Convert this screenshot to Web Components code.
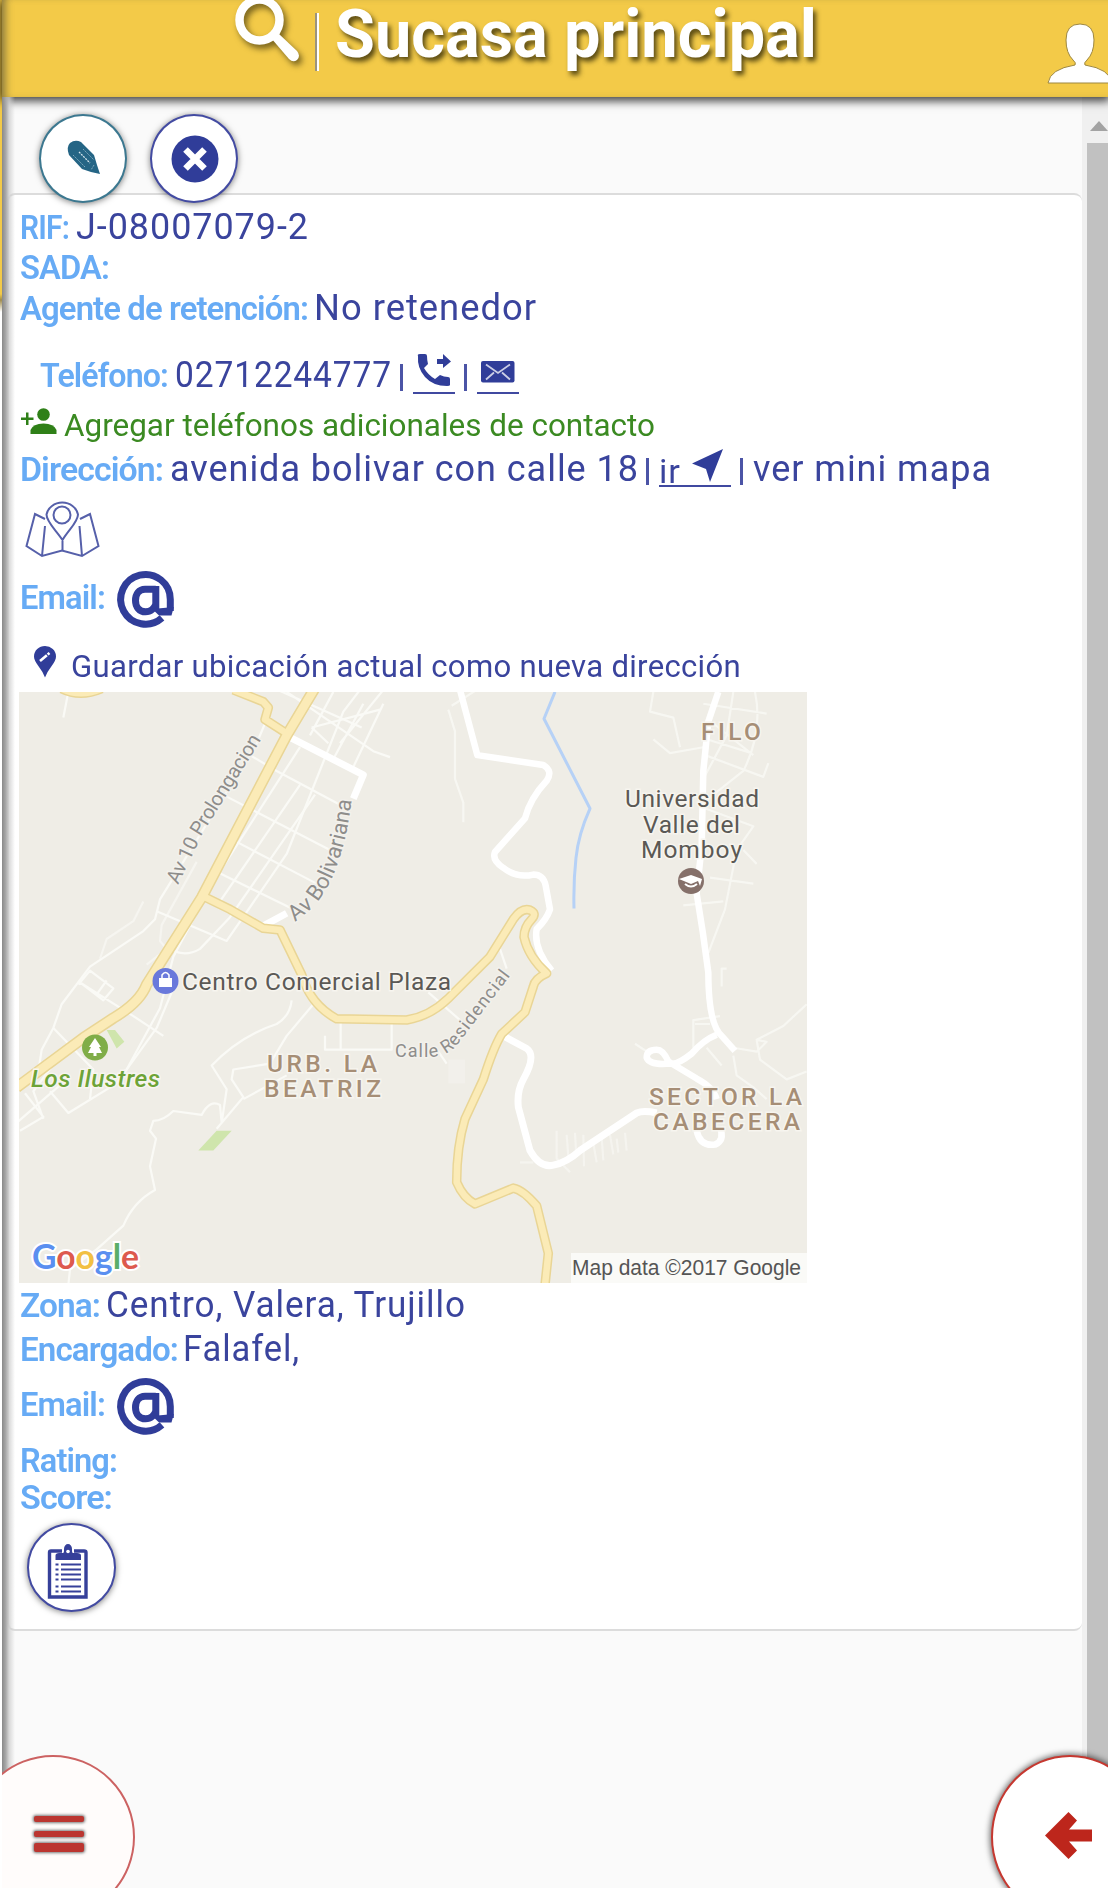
<!DOCTYPE html>
<html lang="es">
<head>
<meta charset="utf-8">
<title>Sucasa principal</title>
<style>
html,body{margin:0;height:1888px;overflow:hidden;background:#fff;font-family:Roboto,"Liberation Sans",sans-serif}
</style>
</head>
<body>
<client-app></client-app>
<script>
const define=(name,html,setup)=>customElements.define(name,class extends HTMLElement{
  connectedCallback(){
    if(this.shadowRoot)return;
    this.attachShadow({mode:'open'}).innerHTML=html;
    if(setup)setup(this,this.shadowRoot);
  }
});

// One run of text drawn at an exact advance width.
define('fit-text',`<style>
:host{display:block;flex:none;line-height:1;white-space:nowrap}
span{display:inline-block;transform-origin:0 50%}
:host([kind=label]){font-size:33px;font-weight:600;color:#67abf5;letter-spacing:-.9px}
:host([kind=label]) span{margin-left:1px}
:host([kind=value]){font-size:37.3px;color:#3a449d;letter-spacing:1px}
:host([kind=link]){font-size:31px;color:#3a449d;letter-spacing:.3px}
:host([kind=add]){font-size:31px;color:#3b8a22}
:host([kind=title]){font-size:66px;font-weight:700;color:#fff;text-shadow:3px 4px 5px rgba(60,50,10,.85)}
</style><span><slot></slot></span>`,(el,root)=>{
  const w=+el.getAttribute('w'),s=root.querySelector('span');
  el.style.width=w+'px';
  const n=s.getBoundingClientRect().width;
  if(n)s.style.transform='scaleX('+w/n+')';
});

// A row whose text baseline lies --b below its top.
define('info-row',`<style>
:host{display:flex;align-items:baseline;box-sizing:border-box;flex:none}
i{width:0;height:var(--b,0px);flex:none}
</style><i></i><slot></slot>`);

define('bar-mark',`<style>:host{display:block;flex:none;width:3px;height:27px;align-self:flex-start;background:#4b54a6}</style>`);

const icons={
 phone:['0 0 34 32','<path d="M1 2Q0 0 3 0H8Q10 0 10 2Q10 6 11 10L7 14Q11 21 18 25L23 21Q27 23 31 23Q33 23 33 25V31Q33 32 30 32Q16 32 8 23Q0 14 1 2Z"/><path d="M20 5H26V0L34 7.500L26 14V10H20Z"/>'],
 mail:['0 0 34 22','<rect x="0" y="0" width="33.500" height="21.500" rx="2"/><path d="M5 3.500L17 12L29 3.500M5 18.500L13 11.500M29 18.500L21 11.500" fill="none" stroke="#fff" stroke-opacity=".75" stroke-width="1.800"/>'],
 person:['0 0 36 26','<path d="M0 9.500H5V4.500H7.500V9.500H12.500V12H7.500V17H5V12H0Z"/><circle cx="22.500" cy="6.500" r="6.300"/><path d="M9.500 26V22Q12 15.500 22.500 15.500Q33 15.500 35.500 22V26Z"/>'],
 go:['0 0 32 33','<path d="M31 0L18 33L14 20L0 14.500Z"/>'],
 map:['0 0 76 60','<g fill="none" stroke="#5660aa" stroke-width="2"><path d="M37.500 41C31 31 21.500 23 21.500 15.500A16 14.500 0 0 1 53 15.500C53 23 43.500 31 37.500 41ZM37.500 42V52"/><circle cx="37" cy="16" r="8.500"/><path d="M20 20L10 15L1.500 47L17 57L37 51.500L57 57L73.500 47L65 15L55 20M20 27L17 57M54.500 27L57 57"/></g>'],
 at:['0 0 58 58','<g fill="none" stroke="#303d99" stroke-width="7"><path d="M45 46.800A24.800 24.800 0 1 1 53.300 28.500V40"/><path d="M38.800 15V40M38.800 18.200H28C22 18.200 18.500 23 18.500 29.500C18.500 36 22.500 40.800 28.500 40.800C34 40.800 37.500 37 38.800 33"/><path d="M35.300 38L56.800 36L54.500 44.500H42Z" fill="#303d99" stroke="none"/></g>'],
 pin:['0 0 22 32','<path d="M11 31.500Q9 26 4 19.500Q0 14 0 10.500A11 10.500 0 0 1 22 10.500Q22 14 18 19.500Q13 26 11 31.500Z"/><path d="M6 15L15.500 7" stroke="#fff" stroke-width="2.600" stroke-dasharray="9 1 3"/>'],
 search:['0 0 66 66','<ellipse cx="24.500" cy="23" rx="20" ry="20.500" fill="none" stroke="#fff" stroke-width="8.500"/><path d="M36 41L44 37L62 54Q66 59 62 63Q58 66 54 62Z" fill="#fff"/>'],
 user:['0 0 64 60','<path d="M0 59Q2 45 27 41Q28.500 39 25 36Q18 29 18 16Q18 0 32 0Q46 0 46 16Q46 29 39 36Q35.500 39 37 41Q62 45 64 59Z" fill="#fff" stroke="#9d8740" stroke-width="1"/>'],
 pencil:['0 0 32 34','<path d="M2 2Q7-2 13 1L26 14L29 24L32 33L23 31L14 28L1 14Q-2 6 2 2Z"/><path d="M5 14L17 26M15 8L26 19M26 24L23 29" stroke="#7fa8bc" stroke-width="1" stroke-dasharray="2 1" fill="none"/><path d="M11 11L22 22" stroke="#d6e7ee" stroke-width="1.300" stroke-dasharray="2 1"/>'],
 close:['0 0 48 48','<circle cx="24" cy="24" r="23.500"/><path d="M14.500 14.500L33.500 33.500M33.500 14.500L14.500 33.500" stroke="#fff" stroke-width="6.500"/>'],
 clip:['0 0 40 56','<path d="M14 7H3Q1.500 7 1.500 8.500V53H38V8.500Q38 7 36 7H26" fill="none" stroke="#36409a" stroke-width="3.400"/><path d="M7.500 16V11.500Q7.500 9 11 9H15Q16 9 16 7V5A4 5 0 0 1 24 5V7Q24 9 25 9H29Q33 9 33 11.500V16Z"/><circle cx="20" cy="7.500" r="1.800" fill="#fff"/><path d="M7.500 20.500H10.500M13 20.500H33M7.500 25.500H10.500M13 25.500H33M7.500 30.500H10.500M13 30.500H33M7.500 35.500H10.500M13 35.500H33M7.500 42.500H10.500M13 42.500H33M7.500 47.500H10.500M13 47.500H33" stroke="#36409a" stroke-width="1.800"/>'],
 back:['0 0 47 47','<path d="M0 23.500L23.500 0L32 8.500L24 17.500H47V29.500H24L32 38.500L23.500 47Z"/>']
};
define('ui-icon',`<style>:host{display:block;flex:none;align-self:flex-start;fill:currentColor;color:#303d99}svg{display:block;overflow:visible;width:100%;height:100%}</style>`,(el,root)=>{
  const [vb,body]=icons[el.getAttribute('name')];
  const [,,w,h]=vb.split(' ');
  el.style.width=w+'px';el.style.height=h+'px';
  root.innerHTML+=`<svg viewBox="${vb}">${body}</svg>`;
});

define('icon-link',`<style>:host{display:flex;flex:none;box-sizing:border-box;align-self:flex-start;align-items:baseline;border-bottom:2.500px solid #4049a0}</style><slot></slot>`);

define('round-button',`<style>
:host{display:flex;flex:none;align-self:flex-start;box-sizing:border-box;width:88px;height:89px;border:2px solid currentColor;border-radius:50%;background:#fff;color:#434ba2;box-shadow:0 1px 6px rgba(0,0,0,.5)}
</style><slot></slot>`);

define('app-header',`<style>
:host{display:flex;flex:none;height:97px;background:#f3ca48;box-shadow:0 2px 9px 2px rgba(0,0,0,.75),inset 8px 0 8px -5px rgba(90,85,60,.75);position:relative;z-index:1;margin-left:2px;overflow:visible}
ui-icon[name=search]{margin:-3px 0 0 233px;filter:drop-shadow(3px 4px 3px rgba(60,50,10,.7))}
.sep{width:2px;height:58px;margin:13px 0 0 14px;background:#fff;border-left:2px solid #9b937c;flex:none}
fit-text{margin:2px 0 0 16px}
ui-icon[name=user]{margin:24px 0 0 231px}
</style>
<ui-icon name="search"></ui-icon><div class="sep"></div><fit-text kind="title" w="482">Sucasa principal</fit-text><ui-icon name="user"></ui-icon>`);

define('scroll-track',`<style>
:host{display:flex;flex-direction:column;width:26px;flex:none;background:#f0f0f0}
.up{width:0;height:0;border:9px solid transparent;border-top:0;border-bottom:10px solid #a3a3a3;margin:24px 0 0 8px}
.thumb{flex:1;background:#c1c1c1;margin:12px 0 0 5px}
</style><div class="up"></div><div class="thumb"></div>`);

define('static-map',`<style>
:host{display:block;flex:none;width:788px;height:591px}
svg{display:block}
path.r,.w path{vector-effect:non-scaling-stroke;fill:none;stroke-linejoin:round}
text{font-family:Roboto,"Liberation Sans",sans-serif;font-size:24.500px}
.p{fill:#5b5955;stroke:#f7f5ef;stroke-width:3px;paint-order:stroke}
.a{fill:#a68e76;font-weight:500;stroke:#f7f5ef;stroke-width:3px;paint-order:stroke}
.s{fill:#8e8d8b;font-size:20px;stroke:#f3f1ec;stroke-width:3px;paint-order:stroke}
</style>
<svg width="788" height="591" viewBox="19 692 788 591">
<defs>
<path class="r" id="yr" d="M945 20L860 140L605 550L500 690L440 770Q420 815 340 855L250 905L50 1030"/>
<path class="r" id="yb" d="M700 25L790 55L805 70L795 100L860 135M185 22Q240 45 305 22M605 545L690 580L790 628L840 632L905 745Q930 820 1010 857L1220 860Q1290 850 1345 805L1470 700L1540 605Q1565 575 1590 582Q1612 590 1595 605Q1572 625 1572 650Q1585 700 1640 742Q1605 755 1600 775L1575 840L1505 895Q1480 930 1450 1010L1395 1110Q1370 1180 1370 1270Q1390 1310 1425 1325L1540 1285Q1570 1290 1610 1330L1645 1450L1635 1530"/>
</defs>
<rect x="19" y="692" width="788" height="591" fill="#efede6"/>
<g transform="translate(0 680) scale(.33333 .39541)">
<path d="M320 885L345 885L373 915L350 932Z" fill="#cfe5ac"/><path d="M650 1140H695L640 1190H595Z" fill="#cfe5ac"/>
<rect x="1345" y="960" width="50" height="60" fill="#f2f0eb"/>
<g class="w" stroke="#fafaf6" stroke-width="2.200">
<path d="M795 110L770 160L480 555L465 605L430 635L270 725L185 820L160 880L125 935L115 990"/>
<path d="M430 560L400 610L320 655L300 705M590 460L485 620L480 660L500 680L440 720" stroke-opacity=".6"/>
<path d="M470 585L680 660L860 440L1030 80L1080 25M820 20L1085 120M860 30L1120 180L1170 195M900 170L640 510L520 700L480 830L380 985L350 1000"/>
<path d="M750 190L830 230L1030 320M680 295L990 430M700 405L950 515M650 485L880 580M1020 160L1150 25M1150 60L1060 220M1000 200L1090 60M935 120L1140 75M945 290L690 600L600 680Q560 700 520 685M900 265L660 560M935 120L985 160M1000 30L930 140"/>
<path d="M235 770L270 735L340 780L310 810L240 765L400 850L490 900M290 795L320 760M160 880L280 985L270 1060M180 950L100 1040L130 1110M50 1120L200 1010M75 1045L130 1105L60 1140M150 1040L205 1095L350 1020L470 880L530 760"/>
<path d="M940 820L860 900L810 970L700 985L695 1010L730 1055L650 1135M875 810Q870 850 830 870Q720 900 635 975L680 1035L665 1120M860 1000L730 1060M665 1120L660 1075Q630 1060 605 1100L520 1090Q490 1115 460 1115L450 1140L468 1160L450 1230L465 1290Q400 1320 370 1380L290 1440L210 1490L205 1530"/>
<path d="M1022 860V935H975V900M1175 860V935H980M1500 680L1520 730M1285 790L1380 860M1315 940L1340 970M205 30L190 95"/>
<path stroke-opacity=".75" d="M1355 65L1430 25M1345 75L1365 130L1365 250L1390 310V360M1960 30L1950 80L2020 95L2040 170M1960 150L2010 185L2110 170M2140 110L2260 190M2200 30L2180 140L2110 250M2265 30Q2290 130 2230 230L2110 310M2110 60L2300 85M2120 150L2255 185M2115 190L2290 245L2305 210M2100 320L2260 370L2210 430L2175 580L2125 690M2130 500L2260 515M2050 570L2170 560M2230 430L2270 465"/>
<path stroke-opacity=".75" d="M2180 730H2165V775M2085 870H2130M2080 930V860L2160 850M2120 930L2165 975M2200 930L2270 940L2300 915L2270 910L2350 875L2420 820M2270 910L2280 960L2360 1010L2420 990M2200 950L2210 1000L2260 1030L2300 1060M1905 920L1950 945"/>
<path stroke-opacity=".55" d="M1670 1140V1210L1710 1245M1700 1150L1705 1205M1725 1145L1728 1190M1750 1150L1752 1230M1780 1170L1790 1220M1805 1155L1810 1215M1830 1150L1840 1200M1850 1160L1855 1195M1875 1145L1880 1190M1560 1220H1600"/>
</g>
<g class="w" stroke="#fff" stroke-width="6.500">
<path d="M870 145L1090 240L1060 300M790 622L860 590" stroke-width="7"/>
<path d="M1380 25L1432 190L1630 215Q1660 230 1640 255Q1590 300 1575 350L1485 435Q1475 455 1510 475Q1550 502 1600 492Q1630 492 1637 520L1650 580Q1640 605 1610 630Q1600 680 1655 735"/>
<path d="M1510 900L1580 932Q1610 950 1570 1010Q1550 1040 1555 1080L1590 1190Q1620 1235 1660 1227Q1700 1220 1740 1190L1910 1095Q1930 1088 1970 1095" stroke-width="7"/>
<path d="M2155 30L2125 105L2110 230L2105 420L2090 540Q2110 640 2125 740Q2125 870 2165 900L2205 938"/>
<path d="M2150 897Q2110 910 2075 945Q2030 975 2010 970Q1950 975 1940 955Q1940 935 1970 935Q1990 935 2005 965L2090 1008Q2140 1030 2150 1060M2090 1140Q2100 1180 2145 1175Q2175 1165 2160 1130"/>
</g>
<g class="w" stroke="#b6d1f6" stroke-width="3"><path d="M1665 30L1632 98L1770 325Q1735 390 1728 450Q1720 510 1722 578"/></g>
<g stroke="#e9d595"><use href="#yb" stroke-width="9.500"/><use href="#yr" stroke-width="11.500"/></g>
<g stroke="#fbebb7"><use href="#yb" stroke-width="6.500"/><use href="#yr" stroke-width="8.500"/></g>
</g>
<g><circle cx="165.500" cy="981" r="13" fill="#6a79db"/><path d="M159 978H172V987H159Z" fill="#fff"/><path d="M162 978V975Q165.500 970 169 975V978" fill="none" stroke="#fff" stroke-width="1.500"/>
<circle cx="95" cy="1047.500" r="13" fill="#80ad48"/><path d="M95 1038L89 1047H91L88 1053H93.500V1056H96.500V1053H102L99 1047H101Z" fill="#fff"/>
<circle cx="691" cy="881" r="13" fill="#85706a"/><path d="M679 879L691 875L702 879L700 886L698 881L691 884Z" fill="#fff"/><path d="M685 884Q691 889 697 884" stroke="#fff" stroke-width="2" fill="none"/></g>
<text class="a" x="701" y="740" textLength="60">FILO</text><text class="a" x="267" y="1071.500" textLength="110">URB. LA</text><text class="a" x="264" y="1096.500" textLength="117">BEATRIZ</text><text class="a" x="649" y="1104.500" textLength="153">SECTOR LA</text><text class="a" x="653" y="1129.500" textLength="147">CABECERA</text>
<text class="p" x="625" y="807" textLength="134">Universidad</text><text class="p" x="643" y="832.500" textLength="97">Valle del</text><text class="p" x="641" y="858" textLength="101">Momboy</text>
<text class="p" x="182" y="990" textLength="269">Centro Comercial Plaza</text>
<text class="p" x="31" y="1087" textLength="129" style="fill:#6da337;font-style:italic;font-weight:500">Los Ilustres</text>
<path id="t1" fill="none" d="M178 885L203 833L263 737"/><path id="t2" fill="none" d="M295 922L310 910Q342 880 352 798"/><path id="t3" fill="none" d="M395 1057L433 1057Q448 1055 457 1045L517 967"/>
<text class="s"><textPath href="#t1" textLength="168">Av 10 Prolongacion</textPath></text>
<text class="s" style="font-size:22px"><textPath href="#t2" textLength="139">Av Bolivariana</textPath></text>
<text class="s" style="font-size:18px"><textPath href="#t3" textLength="153">Calle Residencial</textPath></text>
<rect x="571" y="1253" width="236" height="30" fill="#fafaf7"/>
<text x="572" y="1274.500" textLength="229" lengthAdjust="spacingAndGlyphs" style="font-family:'Liberation Sans',sans-serif;font-size:22px" fill="#555">Map data ©2017 Google</text>
<text x="32" y="1269" textLength="107" lengthAdjust="spacingAndGlyphs" style="font-family:Lato,sans-serif;font-size:34px;font-weight:700;paint-order:stroke" stroke="#fff" stroke-width="4"><tspan fill="#5a8ff0">G</tspan><tspan fill="#dd5a4e">o</tspan><tspan fill="#f2c043">o</tspan><tspan fill="#5a8ff0">g</tspan><tspan fill="#5aae6a">l</tspan><tspan fill="#dd5a4e">e</tspan></text>
</svg>`);

define('client-card',`<style>
:host{display:flex;flex-direction:column;box-sizing:border-box;height:1438px;margin-left:5px;padding-left:10px;background:#fff;border:2px solid #dcdcdc;border-left-color:#e6e6e6;border-right:0;border-radius:8px}
</style>
<info-row style="--b:44px;height:53px"><fit-text kind="label" w="49">RIF:</fit-text><fit-text kind="value" w="233" style="margin-left:8px">J-08007079-2</fit-text></info-row>
<info-row style="--b:30.500px;height:36px"><fit-text kind="label" w="89">SADA:</fit-text></info-row>
<info-row style="--b:36px;height:56px"><fit-text kind="label" w="288">Agente de retención:</fit-text><fit-text kind="value" w="223" style="margin-left:7px">No retenedor</fit-text></info-row>
<info-row style="--b:46.500px;height:66px;padding-left:20px"><fit-text kind="label" w="128">Teléfono:</fit-text><fit-text kind="value" w="217" style="margin-left:8px">02712244777</fit-text><bar-mark style="margin:24px 0 0 8px"></bar-mark><icon-link style="width:42px;height:39.500px;margin:14px 0 0 10px;padding-left:4px"><ui-icon name="phone"></ui-icon></icon-link><bar-mark style="margin:24px 0 0 9px"></bar-mark><icon-link style="width:42px;height:39.500px;margin:14px 0 0 10px;padding:7px 0 0 4px"><ui-icon name="mail"></ui-icon></icon-link></info-row>
<info-row style="--b:30px;height:37px;padding-left:3px"><ui-icon name="person" style="color:#2f8018;margin-top:2px;margin-left:-1px"></ui-icon><fit-text kind="add" w="591" style="margin-left:7px">Agregar teléfonos adicionales de contacto</fit-text></info-row>
<info-row style="--b:37.500px;height:52px"><fit-text kind="label" w="143">Dirección:</fit-text><fit-text kind="value" w="469" style="margin-left:8px">avenida bolivar con calle 18</fit-text><bar-mark style="margin:15px 0 0 7px"></bar-mark><icon-link style="width:72px;height:44px;margin:0 0 0 10px"><info-row style="--b:39.500px"><fit-text kind="value" w="22" style="font-size:34px">ir</fit-text><ui-icon name="go" style="margin:6px 0 0 11px"></ui-icon></info-row></icon-link><bar-mark style="margin:15px 0 0 9px"></bar-mark><fit-text kind="value" w="239" style="margin-left:10px">ver mini mapa</fit-text></info-row>
<info-row style="height:70px;padding:4px 0 0 6px"><ui-icon name="map"></ui-icon></info-row>
<info-row style="--b:43.500px;height:71px"><fit-text kind="label" w="85">Email:</fit-text><ui-icon name="at" style="margin:6px 0 0 13px"></ui-icon></info-row>
<info-row style="--b:41px;height:56px;padding-left:15px"><ui-icon name="pin" style="margin-top:10px"></ui-icon><fit-text kind="link" w="670" style="margin-left:15px">Guardar ubicación actual como nueva dirección</fit-text></info-row>
<static-map></static-map>
<info-row style="--b:34px;height:44px"><fit-text kind="label" w="80">Zona:</fit-text><fit-text kind="value" w="360" style="margin-left:7px">Centro, Valera, Trujillo</fit-text></info-row>
<info-row style="--b:34px;height:44px"><fit-text kind="label" w="158">Encargado:</fit-text><fit-text kind="value" w="117" style="margin-left:6px">Falafel,</fit-text></info-row>
<info-row style="--b:44.500px;height:68px"><fit-text kind="label" w="85">Email:</fit-text><ui-icon name="at" style="margin:7px 0 0 13px"></ui-icon></info-row>
<info-row style="--b:33px;height:41px"><fit-text kind="label" w="97">Rating:</fit-text></info-row>
<info-row style="--b:28.500px;height:38px"><fit-text kind="label" w="92">Score:</fit-text></info-row>
<info-row style="height:110px;padding:5px 0 0 8px"><round-button style="width:89px"><ui-icon name="clip" style="margin:19px 0 0 19px;color:#36409a"></ui-icon></round-button></info-row>
`);

define('client-app',`<style>
:host{display:flex;flex-direction:column;height:1888px;width:1108px;overflow:hidden;background:linear-gradient(#f3ca48 0 294px,#a18d4d 300px,#fff 312px) 0 0/2px 100% no-repeat #fff;position:relative}
.body{display:flex;flex:1;margin-left:2px;background:#fafafa;min-height:0}
main{flex:1;display:flex;flex-direction:column;min-width:0;position:relative}
main::before{content:"";position:absolute;z-index:1;left:0;top:0;bottom:0;width:13px;background:linear-gradient(90deg,#898989,#aaa 30%,rgba(205,205,205,.75) 55%,rgba(240,240,240,0))}
.tools{display:flex;height:96px;box-sizing:border-box;padding:16.500px 0 0 37px;gap:23px;position:relative;z-index:2}
.menu,.back{position:absolute;box-sizing:border-box;border-radius:50%;display:flex;z-index:3}
.menu{left:-29px;top:1755px;width:164px;height:164px;background:#fffcfb;border:2px solid #cc6262;flex-direction:column;padding:59px 0 0 61px;clip-path:inset(0 0 0 31px)}
.menu i{width:50px;height:6px;background:#bb3530;border-radius:2px;box-shadow:0 0 3px 1px #777;margin-bottom:8.500px;flex:none}
.menu i:last-child{height:9px;margin-top:-2px}
.back{left:991px;top:1755px;width:158px;height:164px;background:#fff;border:2px solid #c63830;box-shadow:0 0 6px 1px rgba(0,0,0,.6)}
.back ui-icon{color:#bd261c;margin:55px 0 0 52px}
</style>
<app-header></app-header>
<div class="body"><main><div class="tools"><round-button style="color:#3c7890"><ui-icon name="pencil" style="color:#256585;margin:25px 0 0 27px"></ui-icon></round-button><round-button><ui-icon name="close" style="margin:19px 0 0 19px"></ui-icon></round-button></div><client-card></client-card></main><scroll-track></scroll-track></div>
<div class="menu"><i></i><i></i><i></i></div>
<div class="back"><ui-icon name="back"></ui-icon></div>`);
</script>
</body>
</html>
